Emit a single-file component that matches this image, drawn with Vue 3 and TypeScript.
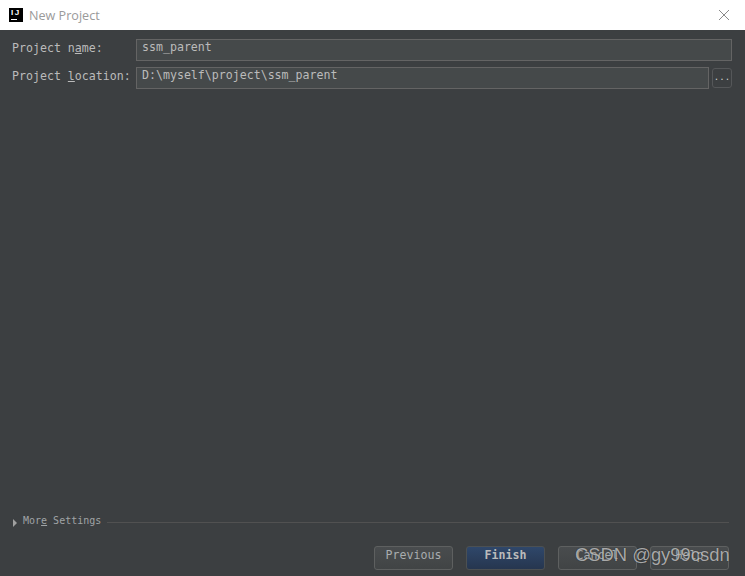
<script setup lang="ts">
const buttons: { label: string; primary?: boolean }[] = [
  { label: 'Previous' },
  { label: 'Finish', primary: true },
  { label: 'Cancel' },
  { label: 'Help' },
]
</script>

<template>
  <div class="dialog">
    <header class="titlebar">
      <div class="logo"><span class="logo-text">IJ</span><span class="logo-bar"></span></div>
      <span class="title">New Project</span>
      <svg class="close" width="12" height="12" viewBox="0 0 12 12" aria-hidden="true">
        <path d="M1 1 L11 11 M11 1 L1 11" stroke="#8a8a8a" stroke-width="1" fill="none" />
      </svg>
    </header>

    <main class="content">
      <div class="row first">
        <label class="label">Project n<u>a</u>me:</label>
        <div class="field">ssm_parent</div>
      </div>
      <div class="row second">
        <label class="label">Project <u>l</u>ocation:</label>
        <div class="field">D:\myself\project\ssm_parent</div>
        <div class="browse">...</div>
      </div>

      <div class="more">
        <span class="triangle"></span>
        <span class="more-label">Mor<u>e</u> Settings</span>
        <span class="rule"></span>
      </div>
    </main>

    <footer class="actions">
      <div v-for="b in buttons" :key="b.label" class="btn" :class="{ primary: b.primary }">{{ b.label }}</div>
    </footer>

    <div class="watermark">CSDN @gy99csdn</div>
  </div>
</template>

<style>
html, body { margin: 0; background: #3c3f41; }
</style>

<style scoped>
.dialog {
  position: relative;
  width: 745px;
  height: 576px;
  display: flex;
  flex-direction: column;
  overflow: hidden;
  background: #3c3f41;
  font-family: "DejaVu Sans Mono", monospace;
  font-size: 11.6px;
  color: #bbbbbb;
}
.titlebar {
  flex: 0 0 30px;
  display: flex;
  align-items: center;
  background: #ffffff;
  padding: 0 15px 0 9px;
}
.logo {
  position: relative;
  width: 14px;
  height: 14px;
  background: #000000;
  margin-top: -1px;
}
.logo-text {
  position: absolute;
  left: 2px;
  top: 1px;
  font-family: "Liberation Sans", sans-serif;
  font-size: 8px;
  line-height: 8px;
  font-weight: 700;
  color: #ffffff;
  letter-spacing: 1.5px;
}
.logo-bar {
  position: absolute;
  left: 2px;
  bottom: 2px;
  width: 6px;
  height: 1px;
  background: #ffffff;
}
.title {
  margin-left: 6px;
  font-family: "Open Sans", sans-serif;
  font-size: 12.6px;
  color: #9a9a9a;
}
.close { margin-left: auto; }
.content {
  flex: 1;
  display: flex;
  flex-direction: column;
  padding: 9px 13px 0 12px;
  min-height: 0;
}
.row {
  display: flex;
  align-items: center;
}
.second { margin-top: 6px; }
.label {
  flex: 0 0 124px;
  white-space: nowrap;
  padding-bottom: 4px;
}
.field {
  flex: 1;
  height: 22px;
  box-sizing: border-box;
  border: 1px solid #646464;
  background: #45494a;
  padding: 0 5px;
  line-height: 14px;
  white-space: nowrap;
}
.browse {
  flex: 0 0 20px;
  height: 20px;
  margin-left: 3px;
  box-sizing: border-box;
  border: 1px solid #555759;
  border-radius: 3px;
  background: #3c3f41;
  text-align: center;
  line-height: 16px;
  font-size: 9px;
  color: #cfcfcf;
}
.more {
  margin-top: auto;
  display: flex;
  align-items: center;
  height: 14px;
  margin-bottom: 19px;
  margin-right: 3px;
}
.triangle {
  width: 0;
  height: 0;
  margin-left: 1px;
  margin-top: 5px;
  border-left: 4px solid #a0a0a0;
  border-top: 4px solid transparent;
  border-bottom: 4px solid transparent;
}
.more-label {
  margin-left: 6px;
  font-size: 10px;
  color: #a0a4a6;
  white-space: nowrap;
}
.rule {
  flex: 1;
  height: 1px;
  margin-left: 6px;
  margin-top: 4px;
  background: #515151;
}
.actions {
  flex: 0 0 30px;
  height: 30px;
  box-sizing: border-box;
  display: flex;
  justify-content: flex-end;
  gap: 13px;
  padding-right: 16px;
}
.btn {
  width: 79px;
  height: 24px;
  box-sizing: border-box;
  border: 1px solid #5e6060;
  border-radius: 3px;
  background: linear-gradient(#494c4e, #414445);
  text-align: center;
  line-height: 17px;
  color: #a9adaf;
}
.btn.primary {
  border-color: #4c5052;
  background: linear-gradient(#2f476a, #26364f);
  color: #bbbbbb;
  font-weight: 700;
}
.watermark {
  position: absolute;
  left: 575px;
  top: 544px;
  font-family: "Liberation Sans", sans-serif;
  font-size: 18.4px;
  line-height: 22px;
  color: rgba(222, 222, 222, 0.72);
  text-shadow: 0 0 1px rgba(0, 0, 0, 0.6);
  white-space: nowrap;
}
</style>
